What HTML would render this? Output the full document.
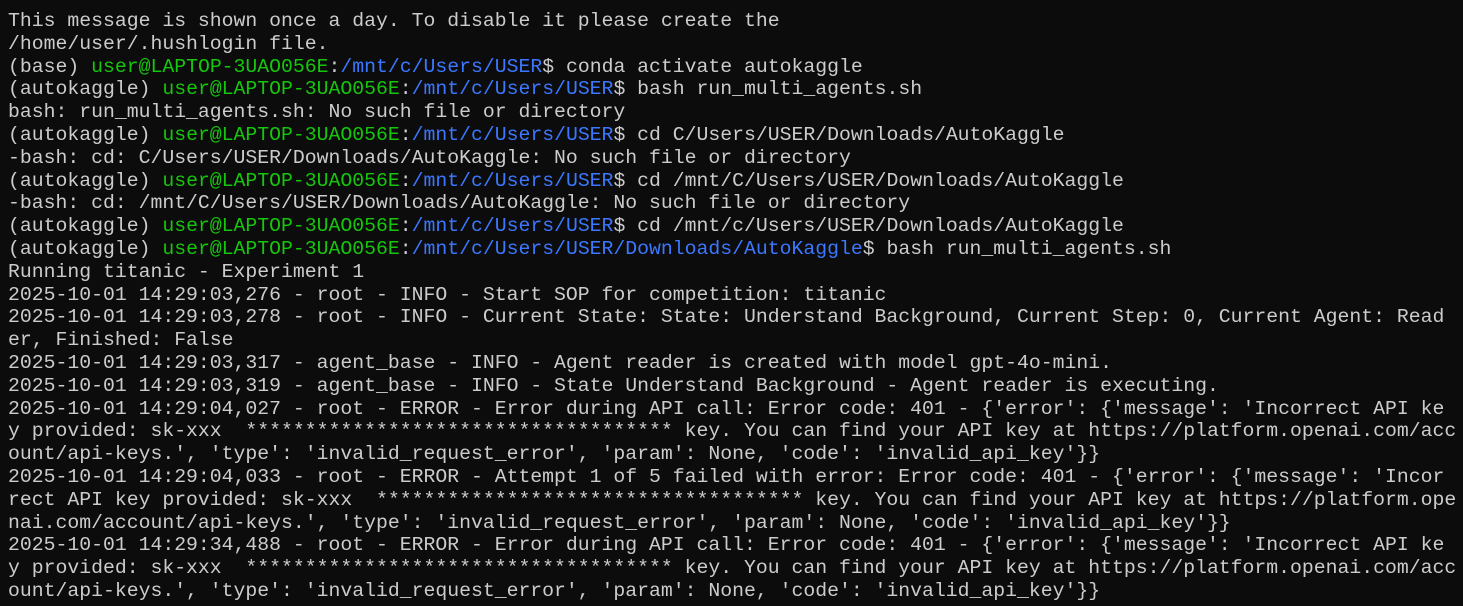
<!DOCTYPE html>
<html><head><meta charset="utf-8"><style>
html,body{margin:0;padding:0;background:#0c0c0c;width:1463px;height:606px;overflow:hidden}
pre{margin:0;padding:10px 0 0 8px;font-family:"Liberation Mono","DejaVu Sans Mono",monospace;font-size:19.8px;line-height:22.8px;color:#cccccc;white-space:pre}
.g{color:#16c60c}.b{color:#3b78ff}
</style></head><body><pre>This message is shown once a day. To disable it please create the
/home/user/.hushlogin file.
(base) <span class="g">user@LAPTOP-3UAO056E</span>:<span class="b">/mnt/c/Users/USER</span>$ conda activate autokaggle
(autokaggle) <span class="g">user@LAPTOP-3UAO056E</span>:<span class="b">/mnt/c/Users/USER</span>$ bash run_multi_agents.sh
bash: run_multi_agents.sh: No such file or directory
(autokaggle) <span class="g">user@LAPTOP-3UAO056E</span>:<span class="b">/mnt/c/Users/USER</span>$ cd C/Users/USER/Downloads/AutoKaggle
-bash: cd: C/Users/USER/Downloads/AutoKaggle: No such file or directory
(autokaggle) <span class="g">user@LAPTOP-3UAO056E</span>:<span class="b">/mnt/c/Users/USER</span>$ cd /mnt/C/Users/USER/Downloads/AutoKaggle
-bash: cd: /mnt/C/Users/USER/Downloads/AutoKaggle: No such file or directory
(autokaggle) <span class="g">user@LAPTOP-3UAO056E</span>:<span class="b">/mnt/c/Users/USER</span>$ cd /mnt/c/Users/USER/Downloads/AutoKaggle
(autokaggle) <span class="g">user@LAPTOP-3UAO056E</span>:<span class="b">/mnt/c/Users/USER/Downloads/AutoKaggle</span>$ bash run_multi_agents.sh
Running titanic - Experiment 1
2025-10-01 14:29:03,276 - root - INFO - Start SOP for competition: titanic
2025-10-01 14:29:03,278 - root - INFO - Current State: State: Understand Background, Current Step: 0, Current Agent: Read
er, Finished: False
2025-10-01 14:29:03,317 - agent_base - INFO - Agent reader is created with model gpt-4o-mini.
2025-10-01 14:29:03,319 - agent_base - INFO - State Understand Background - Agent reader is executing.
2025-10-01 14:29:04,027 - root - ERROR - Error during API call: Error code: 401 - {'error': {'message': 'Incorrect API ke
y provided: sk-xxx  ************************************ key. You can find your API key at https://platform.openai.com/acc
ount/api-keys.', 'type': 'invalid_request_error', 'param': None, 'code': 'invalid_api_key'}}
2025-10-01 14:29:04,033 - root - ERROR - Attempt 1 of 5 failed with error: Error code: 401 - {'error': {'message': 'Incor
rect API key provided: sk-xxx  ************************************ key. You can find your API key at https://platform.ope
nai.com/account/api-keys.', 'type': 'invalid_request_error', 'param': None, 'code': 'invalid_api_key'}}
2025-10-01 14:29:34,488 - root - ERROR - Error during API call: Error code: 401 - {'error': {'message': 'Incorrect API ke
y provided: sk-xxx  ************************************ key. You can find your API key at https://platform.openai.com/acc
ount/api-keys.', 'type': 'invalid_request_error', 'param': None, 'code': 'invalid_api_key'}}</pre></body></html>
